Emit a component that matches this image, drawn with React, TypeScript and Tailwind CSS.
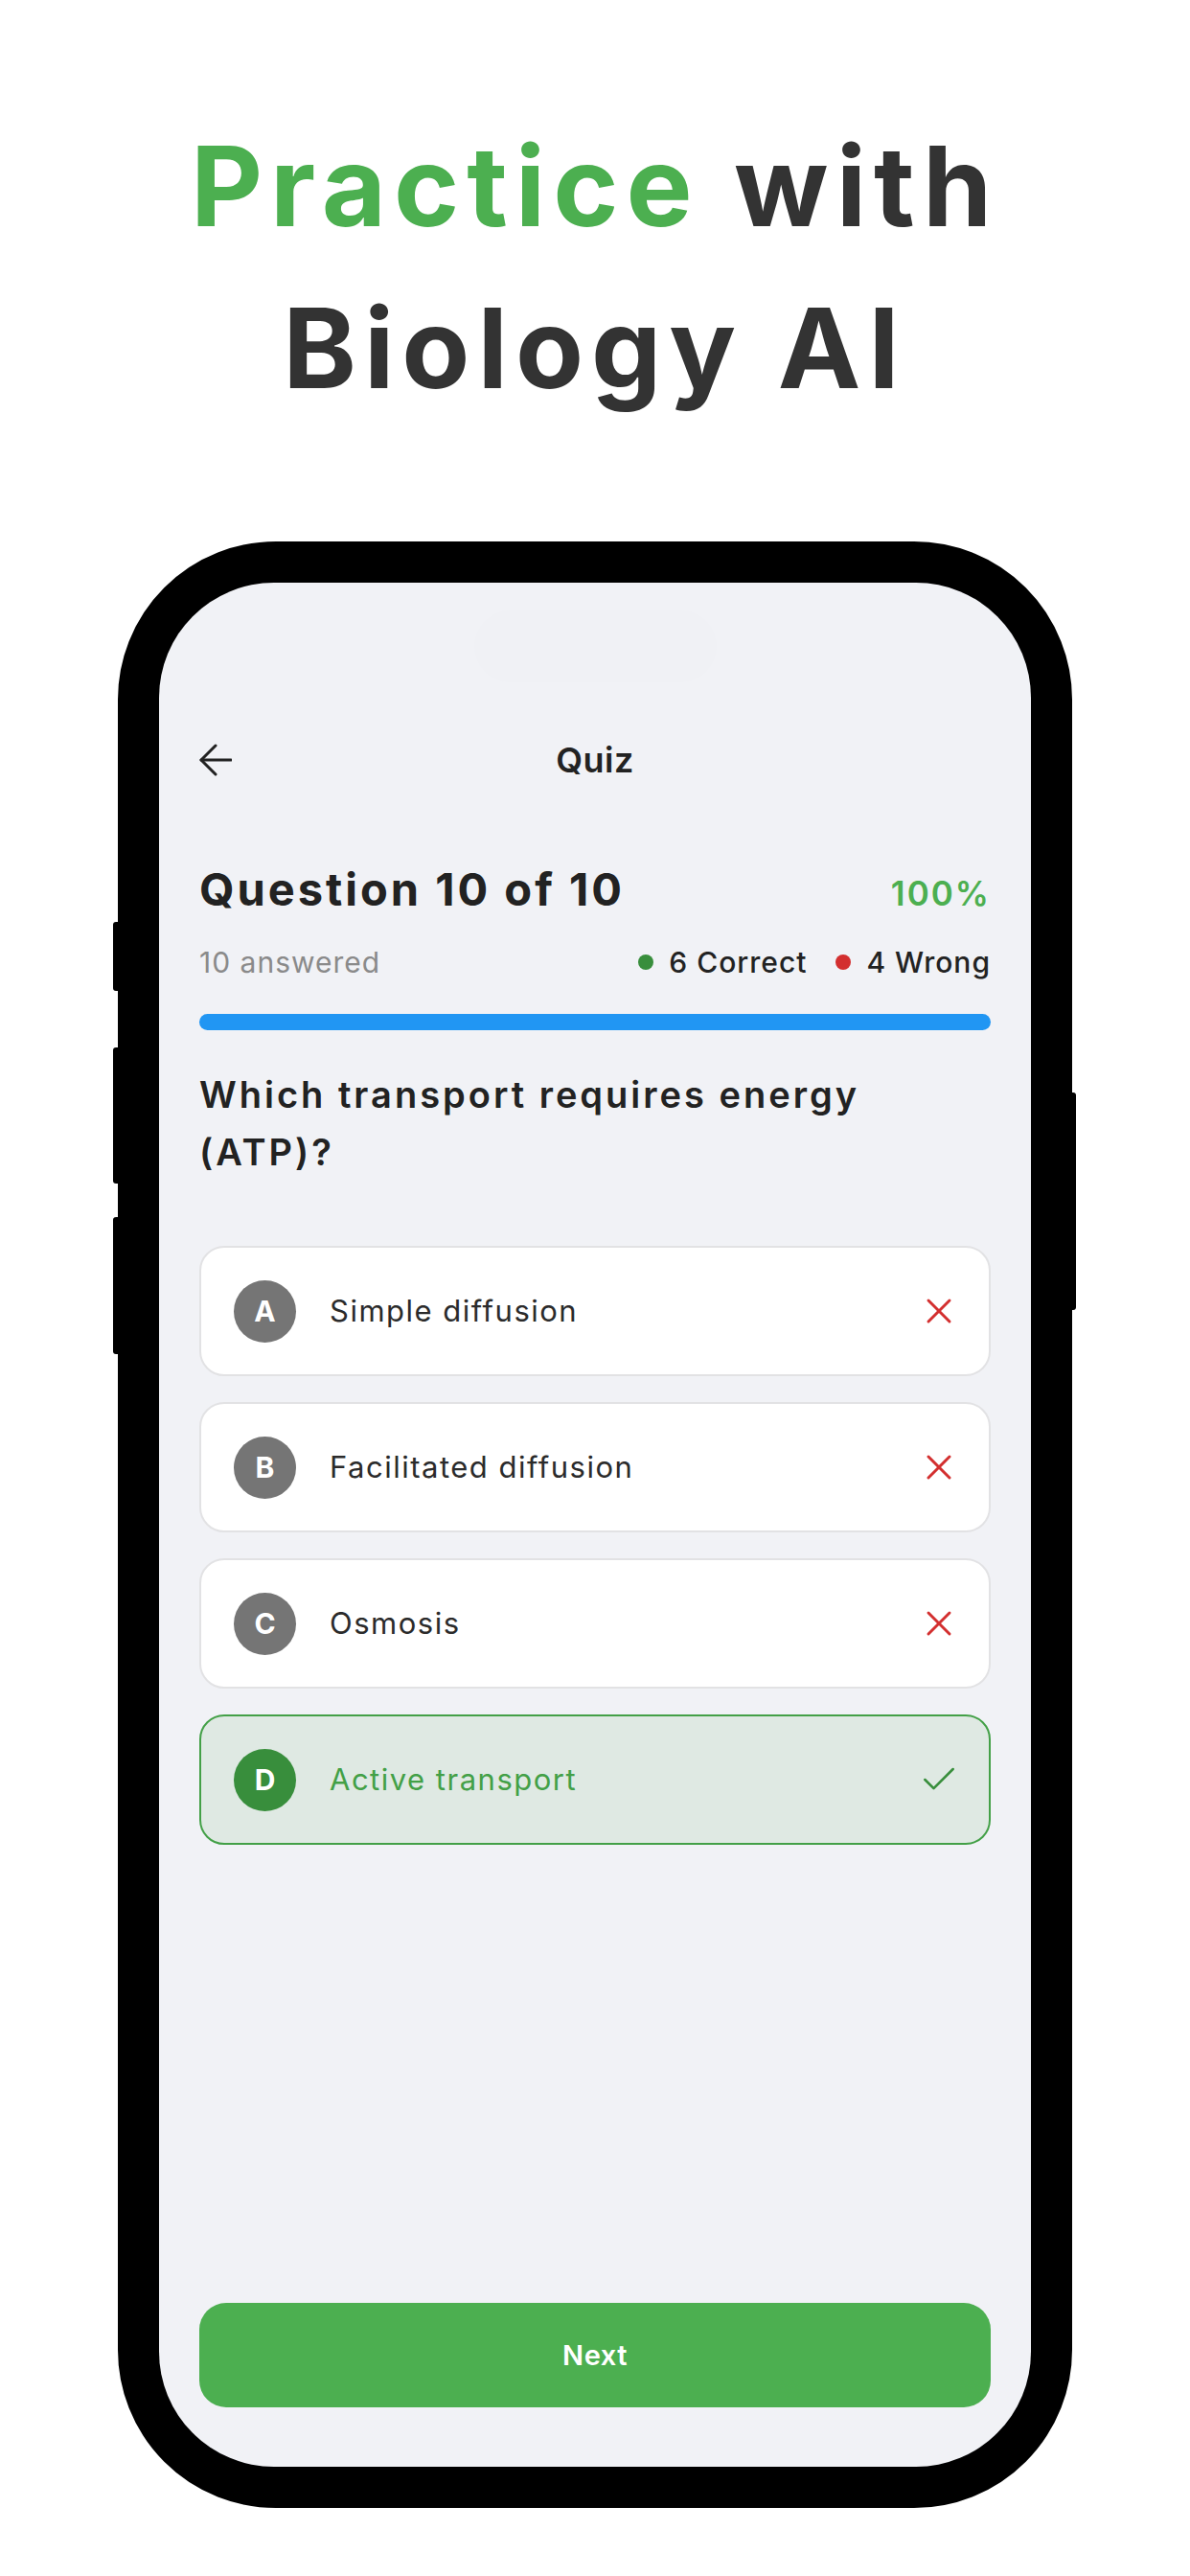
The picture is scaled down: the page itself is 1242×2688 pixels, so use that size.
import { Check, X } from "lucide-react";

const options = [
  { letter: "A", text: "Simple diffusion", correct: false },
  { letter: "B", text: "Facilitated diffusion", correct: false },
  { letter: "C", text: "Osmosis", correct: false },
  { letter: "D", text: "Active transport", correct: true },
];

function BackArrow() {
  return (
    <svg width="34" height="34" viewBox="0 0 34 34" fill="none" stroke="#222222" strokeWidth="3" strokeLinecap="round" strokeLinejoin="round">
      <path d="M33 17H2" />
      <path d="M17 2L2 17l15 15" />
    </svg>
  );
}

function OptionCard({ letter, text, correct }: { letter: string; text: string; correct: boolean }) {
  return (
    <div
      className={`flex h-[136px] items-center rounded-[26px] border-2 pl-[34px] pr-[30px] ${
        correct ? "border-[#43a047] bg-[#dfe9e3]" : "border-[#e2e2e4] bg-white"
      }`}
    >
      <div
        className={`flex h-[65px] w-[65px] shrink-0 items-center justify-center rounded-full text-[30px] font-bold text-white ${
          correct ? "bg-[#388e3c]" : "bg-[#757575]"
        }`}
      >
        {letter}
      </div>
      <span
        className={`ml-[35px] flex-1 text-[31px] leading-[40px] tracking-[1.5px] ${
          correct ? "text-[#43a047]" : "text-[#2b2b2b]"
        }`}
      >
        {text}
      </span>
      {correct ? (
        <Check className="h-[44px] w-[44px] text-[#388e3c]" strokeWidth={1.4} />
      ) : (
        <X className="h-[44px] w-[44px] text-[#d32f2f]" strokeWidth={1.6} />
      )}
    </div>
  );
}

export default function App() {
  return (
    <div className="flex min-h-[2688px] w-[1242px] flex-col items-center bg-white font-['Inter',sans-serif]">
      <h1 className="pt-[110px] text-center text-[116px] font-bold leading-[169px] tracking-[8px] text-[#333333]">
        <span className="text-[#4caf50]">Practice</span> with
        <br />
        Biology AI
      </h1>

      <div className="relative mt-[117px] h-[2052px] w-[996px] rounded-[165px] border-[43px] border-black bg-black">
        {/* side buttons */}
        <div className="absolute -left-[48px] top-[354px] h-[72px] w-[8px] rounded-l-[3px] bg-black" />
        <div className="absolute -left-[48px] top-[485px] h-[142px] w-[8px] rounded-l-[3px] bg-black" />
        <div className="absolute -left-[48px] top-[662px] h-[143px] w-[8px] rounded-l-[3px] bg-black" />
        <div className="absolute -right-[47px] top-[532px] h-[227px] w-[8px] rounded-r-[3px] bg-black" />

        <div className="flex h-full w-full flex-col overflow-hidden rounded-[120px] bg-[#f1f2f6] px-[42px]">
          <div className="mx-auto mt-[29px] h-[75px] w-[253px] rounded-full bg-[#f0f1f5]" />

          <div className="relative mt-[49px] flex h-[64px] items-center justify-center">
            <div className="absolute left-0 top-[15px]">
              <BackArrow />
            </div>
            <span className="text-[36px] font-semibold leading-[64px] tracking-[0.5px] text-[#222222]">Quiz</span>
          </div>

          <div className="mt-[75px] flex items-baseline justify-between">
            <span className="text-[47px] font-bold leading-[56px] tracking-[3px] text-[#222222]">Question 10 of 10</span>
            <span className="text-[35px] font-semibold leading-[56px] tracking-[2px] text-[#4caf50]">100%</span>
          </div>

          <div className="mt-[24px] flex items-center justify-between text-[30px] leading-[40px] tracking-[1px]">
            <span className="text-[#8a8a8a]">10 answered</span>
            <div className="flex items-center font-medium text-[#222222]">
              <span className="h-[16px] w-[16px] rounded-full bg-[#388e3c]" />
              <span className="ml-[16px]">6 Correct</span>
              <span className="ml-[30px] h-[16px] w-[16px] rounded-full bg-[#d32f2f]" />
              <span className="ml-[16px]">4 Wrong</span>
            </div>
          </div>

          <div className="mt-[34px] h-[17px] w-full rounded-full bg-[#2196f3]" />

          <p className="mt-[37px] pr-[60px] text-[38px] font-semibold leading-[60px] tracking-[3px] text-[#222222]">
            Which transport requires energy (ATP)?
          </p>

          <div className="mt-[68px] flex flex-col gap-[27px]">
            {options.map((o) => (
              <OptionCard key={o.letter} {...o} />
            ))}
          </div>

          <button
            type="button"
            className="mb-[62px] mt-auto h-[109px] w-full rounded-[28px] bg-[#4caf50] text-[29px] font-semibold tracking-[0.5px] text-white"
          >
            Next
          </button>
        </div>
      </div>
    </div>
  );
}
